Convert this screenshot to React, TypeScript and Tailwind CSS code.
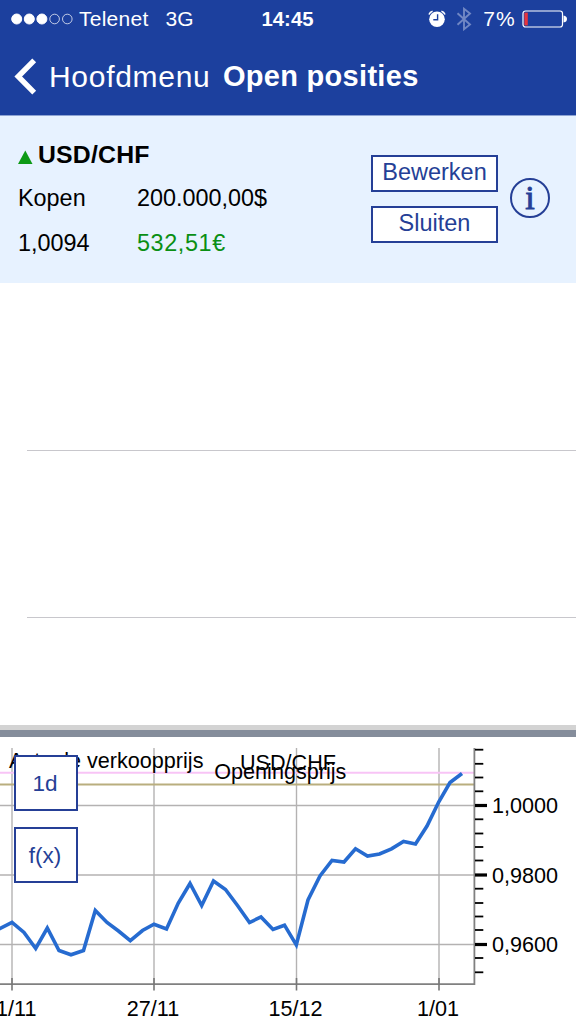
const series = [
  [-2, 929.5], [12, 922.3], [24, 932.5], [35.7, 948.5], [47.3, 928], [59, 950.5], [71, 954.8], [83.5, 950.5],
  [95.3, 910.5], [107, 922.5], [118.5, 931], [130.3, 940.7], [142.5, 930.5], [154, 924.2], [166.5, 929],
  [178.3, 903], [190, 883.5], [201.7, 905.5], [213.5, 881], [225.5, 889.5], [237.5, 905.5], [249.5, 922.5],
  [261, 917], [273, 929.5], [284.5, 925.2], [296.3, 945], [308, 900], [320, 876], [332, 860.5], [344, 862],
  [355.5, 848.8], [367.5, 856], [379.5, 854], [391.5, 848.8], [403.5, 841.5], [415.5, 844], [427, 826],
  [438.7, 802], [450, 782.5], [462, 773.5],
];

const dates = [
  { x: 12, label: "11/11" },
  { x: 154, label: "27/11" },
  { x: 296.5, label: "15/12" },
  { x: 439, label: "1/01" },
];

const prices = [
  { y: 805.5, label: "1,0000" },
  { y: 875, label: "0,9800" },
  { y: 944.5, label: "0,9600" },
];

const minorTicks = [749.7, 763.8, 777.5, 791.3, 819.3, 833.5, 847, 860.5, 888.7, 903, 916.5, 930, 958, 972.3];

function StatusBar() {
  return (
    <div className="grid h-[38px] grid-cols-[230px_115px_1fr] items-center text-[21px] leading-none">
      <div className="flex items-center pl-[11px]">
        <svg className="shrink-0" width="62" height="14" viewBox="0 0 62 14" fill="white" stroke="white">
          <circle cx="5.7" cy="7" r="5" />
          <circle cx="18.3" cy="7" r="5" />
          <circle cx="30.9" cy="7" r="5" />
          <circle cx="43.6" cy="7" r="4.8" fill="none" strokeWidth="0.9" opacity="0.8" />
          <circle cx="56.3" cy="7" r="4.8" fill="none" strokeWidth="0.9" opacity="0.8" />
        </svg>
        <span className="-mt-px ml-[6px] tracking-[0.25px]">Telenet</span>
        <span className="-mt-px ml-[17px]">3G</span>
      </div>
      <div className="text-center text-[20.3px] font-bold">14:45</div>
      <div className="flex items-center justify-end pr-[9px]">
        <svg width="18" height="18" viewBox="0 0 18 18">
          <circle cx="9" cy="9.3" r="7.8" fill="white" />
          <path d="M1 4.5 Q2 1.8 4.6 1.3 M17 4.5 Q16 1.8 13.4 1.3" fill="none" stroke="white" strokeWidth="1.6" />
          <path d="M9.6 4.3 V9.8 H5.3" fill="none" stroke="#1c409e" strokeWidth="1.4" />
        </svg>
        <svg className="ml-[10px]" width="16" height="24" viewBox="0 0 16 24" fill="none" stroke="#7187c4" strokeWidth="1.9">
          <path d="M1.5 6.3 L14 17.5 L8 22.2 V1.8 L14 6.5 L1.5 17.7" />
        </svg>
        <span className="-mt-px ml-[11px] tracking-[1.2px]">7%</span>
        <svg className="ml-[6px]" width="45" height="18" viewBox="0 0 45 18">
          <rect x="1" y="1" width="39.5" height="16" rx="2.5" fill="none" stroke="white" strokeWidth="1.2" />
          <rect x="2.4" y="2.6" width="3.4" height="12.8" fill="#e8343c" />
          <path d="M41.5 5.5 Q45 6 45 9 Q45 12 41.5 12.5 Z" fill="white" />
        </svg>
      </div>
    </div>
  );
}

function NavBar() {
  return (
    <div className="flex h-[77px] items-center pl-[14px]">
      <svg width="23" height="37" viewBox="0 0 23 37" fill="none" stroke="white" strokeWidth="5.4">
        <path d="M20.2 2.3 L4.2 18.5 L20.2 34.7" />
      </svg>
      <a href="#" className="ml-3 text-[30px] leading-none tracking-[0.7px]">Hoofdmenu</a>
      <h1 className="ml-[12.5px] text-[29px] leading-none font-bold tracking-[0.3px]">Open posities</h1>
    </div>
  );
}

function Position() {
  return (
    <div className="flex h-[168px] border-t border-[#8da3d3] bg-[#e7f2ff]">
      <div className="w-[371px] pt-[24px] pl-[18px]">
        <div className="flex h-[30px] items-center">
          <svg className="mt-[3px]" width="15" height="14" viewBox="0 0 15 14">
            <path d="M7.3 0.5 L14.5 14 H0 Z" fill="#0d9a16" />
          </svg>
          <h2 className="ml-[5px] text-[24.8px] leading-none font-bold tracking-[0.2px]">USD/CHF</h2>
        </div>
        <div className="mt-[6px] grid grid-cols-[119px_1fr] text-[23.4px] leading-[45px]">
          <span>Kopen</span>
          <span>200.000,00$</span>
          <span>1,0094</span>
          <span className="tracking-[0.6px] text-[#0a8f14]">532,51€</span>
        </div>
      </div>
      <div className="flex w-[127px] flex-col gap-[14px] pt-[39px] text-[#253f96]">
        <button className="h-[37px] border-2 border-[#253f96] bg-white pb-px text-[23.5px] leading-none">Bewerken</button>
        <button className="h-[37px] border-2 border-[#253f96] bg-white pb-px text-[23.5px] leading-none">Sluiten</button>
      </div>
      <div className="mt-[62px] ml-[12px] flex h-10 w-10 items-center justify-center rounded-full border-2 border-[#253f96] font-['Liberation_Serif',serif] text-[34px] leading-none text-[#253f96] [-webkit-text-stroke:0.9px_#253f96]">
        i
      </div>
    </div>
  );
}

function Chart() {
  return (
    <div className="relative h-[287px]">
      <svg className="block" width="576" height="287" viewBox="0 737 576 287">
        <g stroke="#b4b2b2" strokeWidth="1.4">
          {prices.map((p) => (
            <line key={p.label} x1="0" x2="474" y1={p.y} y2={p.y} />
          ))}
          {dates.map((d) => (
            <line key={d.label} x1={d.x} x2={d.x} y1="748" y2="984" />
          ))}
        </g>
        <path d="M0 772.8 H474" stroke="#f8c4f6" strokeWidth="2" />
        <path d="M0 784.6 H474" stroke="#b9ae7e" strokeWidth="2" />
        <polyline
          points={series.map((p) => p.join(",")).join(" ")}
          fill="none"
          stroke="#266bd0"
          strokeWidth="3.6"
        />
        <path d="M474.4 748 V985 M0 984.2 H475" stroke="#808080" strokeWidth="1.8" fill="none" />
        {dates.map((d) => (
          <line key={d.label} x1={d.x} x2={d.x} y1="978" y2="990.5" stroke="#777" strokeWidth="1.6" />
        ))}
        {minorTicks.map((y) => (
          <line key={y} x1="475" x2="483.3" y1={y} y2={y} stroke="black" strokeWidth="1.8" />
        ))}
        {prices.map((p) => (
          <line key={p.label} x1="475" x2="487" y1={p.y} y2={p.y} stroke="black" strokeWidth="3.2" />
        ))}
        <g fontSize="21.6" fill="black">
          {prices.map((p) => (
            <text key={p.label} x="492" y={p.y + 7.6}>{p.label}</text>
          ))}
          {dates.map((d) => (
            <text key={d.label} x={d.x - 1} y="1016" textAnchor="middle">{d.label}</text>
          ))}
          <text x="9" y="767.5">Actuele verkoopprijs</text>
          <text x="240" y="769.5">USD/CHF</text>
          <text x="214.3" y="779">Openingsprijs</text>
        </g>
      </svg>
      <div className="absolute top-[18px] left-[14px] flex flex-col gap-4 text-[22.5px] leading-none text-[#253f96]">
        <button className="h-14 w-16 border-2 border-[#253f96] bg-white pt-0.5 pr-0.5">1d</button>
        <button className="h-14 w-16 border-2 border-[#253f96] bg-white pt-0.5 pr-0.5">f(x)</button>
      </div>
    </div>
  );
}

export default function App() {
  return (
    <div className="flex h-[1024px] w-[576px] flex-col overflow-hidden bg-white font-['Liberation_Sans',Arial,sans-serif] text-black">
      <header className="h-[115px] bg-[#1c409e] text-white">
        <StatusBar />
        <NavBar />
      </header>
      <Position />
      <div className="ml-[27px] h-[168px] border-b border-[#c8c7cc]" />
      <div className="ml-[27px] h-[167px] border-b border-[#c8c7cc]" />
      <div className="flex-1" />
      <div className="h-[5px] bg-[#d3d3d3]" />
      <div className="h-[7px] bg-[#858d9b]" />
      <Chart />
    </div>
  );
}
